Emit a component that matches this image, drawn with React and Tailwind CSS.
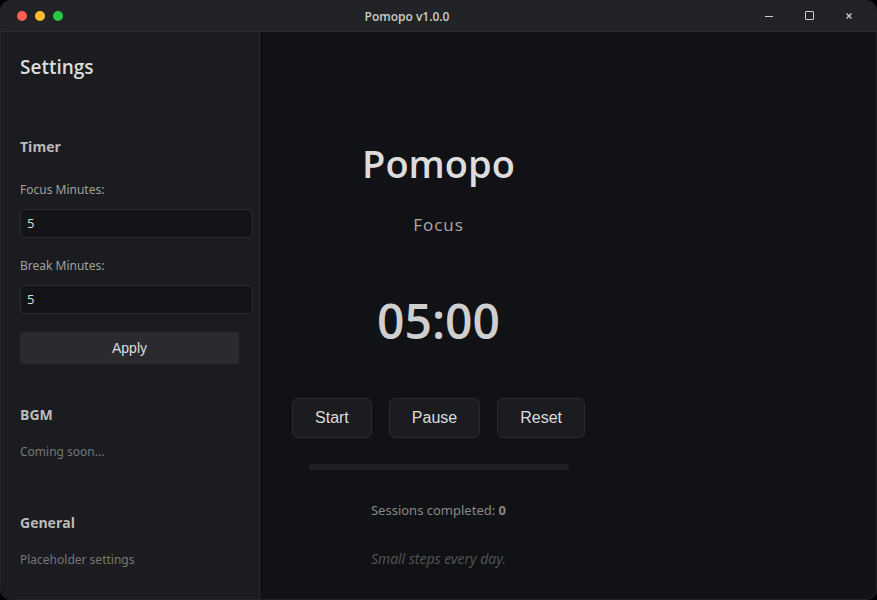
import { useState } from "react";

function TitleBar() {
  return (
    <header className="flex h-[31px] shrink-0 items-center border-b border-[#2a2b2e] bg-[#222326]">
      <div className="flex gap-2 px-4">
        <span className="size-[10px] rounded-full bg-[#ff5f57]" />
        <span className="size-[10px] rounded-full bg-[#febc2e]" />
        <span className="size-[10px] rounded-full bg-[#28c840]" />
      </div>
      <div className="grow pt-px pr-[14px] text-center text-[12px] leading-4 font-semibold text-[#cccccc]">Pomopo v1.0.0</div>
      <div className="flex justify-end pr-[7px]">
        <button type="button" aria-label="Minimize" className="flex h-[30px] w-10 items-center justify-center">
          <svg width="12" height="12" viewBox="0 0 12 12" fill="none" stroke="#d0d0d0"><path d="M2 6.5h8" /></svg>
        </button>
        <button type="button" aria-label="Maximize" className="flex h-[30px] w-10 items-center justify-center">
          <svg width="12" height="12" viewBox="0 0 12 12" fill="none" stroke="#d0d0d0"><rect x="2.5" y="1.5" width="8" height="8" rx="0.5" /></svg>
        </button>
        <button type="button" aria-label="Close" className="flex h-[30px] w-10 items-center justify-center">
          <svg width="12" height="12" viewBox="0 0 12 12" fill="none" stroke="#d0d0d0" strokeWidth="1.3"><path d="M3.5 3.5l5 5M8.5 3.5l-5 5" /></svg>
        </button>
      </div>
    </header>
  );
}

function MinutesField({ id, label, value, onChange }) {
  return (
    <div>
      <label htmlFor={id} className="block font-['Noto_Sans',sans-serif] text-[12px] leading-5 text-[#a0a0a0]">{label}</label>
      <input
        id={id}
        inputMode="numeric"
        value={value}
        onChange={(e) => onChange(e.target.value)}
        className="mt-[9px] block h-[29px] w-[233px] rounded-[4px] border border-[#2b2c2f] bg-[#131417] px-[6px] pb-[2px] text-[13px] text-[#dddddd] outline-none"
      />
    </div>
  );
}

function Settings() {
  const [focus, setFocus] = useState("5");
  const [rest, setRest] = useState("5");
  return (
    <aside className="w-[259px] shrink-0 border-r border-[#2a2b2e] bg-[#1b1c1f] pt-[21px] pr-5 pl-[19px]">
      <h2 className="text-[19px] leading-7 font-semibold text-[#dddddd]">Settings</h2>
      <section className="mt-[56px]">
        <h3 className="text-[14px] leading-5 font-bold text-[#bbbbbb]">Timer</h3>
        <div className="mt-[23px] flex flex-col gap-[18px]">
          <MinutesField id="focus" label="Focus Minutes:" value={focus} onChange={setFocus} />
          <MinutesField id="break" label="Break Minutes:" value={rest} onChange={setRest} />
        </div>
        <button type="button" className="mt-[18px] h-8 w-full rounded-[4px] bg-[#2a2b2e] font-['Liberation_Sans',sans-serif] text-[14px] text-[#dddddd]">Apply</button>
      </section>
      <section className="mt-[41px]">
        <h3 className="text-[14px] leading-5 font-bold text-[#bbbbbb]">BGM</h3>
        <p className="mt-[17px] font-['Noto_Sans',sans-serif] text-[12px] leading-5 text-[#777777]">Coming soon...</p>
      </section>
      <section className="mt-[51px]">
        <h3 className="text-[14px] leading-5 font-bold text-[#bbbbbb]">General</h3>
        <p className="mt-[17px] font-['Noto_Sans',sans-serif] text-[12px] leading-5 text-[#777777]">Placeholder settings</p>
      </section>
    </aside>
  );
}

function ControlButton({ children }) {
  return (
    <button type="button" className="h-10 rounded-[6px] border border-[#2a2b2e] bg-[#1b1c1f] px-[22px] font-['Liberation_Sans',sans-serif] text-[16px] text-[#dddddd]">
      {children}
    </button>
  );
}

export default function App() {
  return (
    <div className="min-h-screen bg-black font-['Open_Sans','Noto_Sans',sans-serif]">
      <div className="flex min-h-screen flex-col overflow-hidden rounded-[10px] border border-[#222326] bg-[#111215]">
        <TitleBar />
        <div className="flex grow">
          <Settings />
          <main className="flex grow flex-col items-center pt-[107px] pr-[259px]">
            <h1 className="text-[38px] leading-[48px] font-semibold text-[#dddddd]">Pomopo</h1>
            <p className="mt-[26px] text-[17px] leading-6 tracking-[1px] text-[#aaaaaa]">Focus</p>
            <div className="mt-[52px] text-[48px] leading-[64px] font-semibold text-[#cfcfcf]">05:00</div>
            <div className="mt-[45px] flex gap-[17px]">
              <ControlButton>Start</ControlButton>
              <ControlButton>Pause</ControlButton>
              <ControlButton>Reset</ControlButton>
            </div>
            <div role="progressbar" aria-label="Session progress" aria-valuenow={0} className="mt-[26px] h-[6px] w-[260px] rounded-full bg-[#1f2023]" />
            <p className="mt-[30px] font-['Noto_Sans',sans-serif] text-[13px] leading-5 text-[#888888]">
              Sessions completed: <strong className="font-bold">0</strong>
            </p>
            <p className="mt-[29px] text-[14px] leading-5 text-[#555555] italic">Small steps every day.</p>
          </main>
        </div>
      </div>
    </div>
  );
}
